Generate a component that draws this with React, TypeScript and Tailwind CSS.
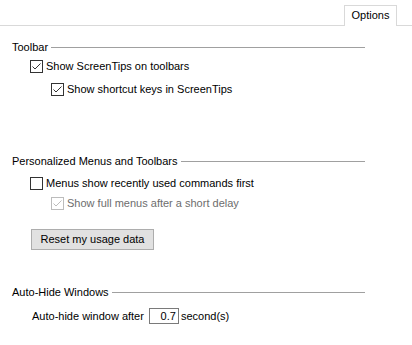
import React from 'react';

const font = { fontFamily: '"Liberation Sans", Arial, sans-serif' };

function Check({ checked, disabled }: { checked?: boolean; disabled?: boolean }) {
  const color = disabled ? '#bcbcbc' : '#333333';
  return (
    <span
      className={`flex h-[13px] w-[13px] shrink-0 items-center justify-center border bg-white ${
        disabled ? 'border-[#bcbcbc]' : 'border-[#333333]'
      }`}
    >
      {checked && (
        <svg width="11" height="11" viewBox="0 0 11 11">
          <polyline points="1.5,5.5 4,8 9.5,2.5" fill="none" stroke={color} strokeWidth="1" />
        </svg>
      )}
    </span>
  );
}

function GroupHeader({ title }: { title: string }) {
  return (
    <div className="mr-[47px] flex h-[14px] items-center gap-[3px] pl-3">
      <span className="leading-[14px] whitespace-nowrap">{title}</span>
      <div className="h-px flex-1 bg-[#a0a0a0]" />
    </div>
  );
}

function CheckRow({
  label,
  checked,
  disabled,
  indent,
  className = '',
}: {
  label: string;
  checked?: boolean;
  disabled?: boolean;
  indent: string;
  className?: string;
}) {
  return (
    <div className={`flex h-[13px] items-center gap-[3px] ${indent} ${className}`}>
      <Check checked={checked} disabled={disabled} />
      <span className={`leading-[13px] whitespace-nowrap ${disabled ? 'text-[#6d6d6d]' : 'text-black'}`}>
        {label}
      </span>
    </div>
  );
}

export default function App() {
  return (
    <div className="h-[345px] w-[412px] bg-white text-[11px] text-black" style={font}>
      {/* tab strip */}
      <div className="flex h-[26px] items-end">
        <div className="h-px flex-1 bg-[#d9d9d9]" />
        <div className="flex h-[21px] w-[53px] items-center justify-center border border-b-0 border-[#d9d9d9] pb-px">
          Options
        </div>
        <div className="h-px w-[15px] bg-[#d9d9d9]" />
      </div>

      {/* Toolbar */}
      <div className="mt-[14px]">
        <GroupHeader title="Toolbar" />
      </div>
      <CheckRow className="mt-[6px]" indent="pl-[30px]" checked label="Show ScreenTips on toolbars" />
      <CheckRow className="mt-[10px]" indent="pl-[51px]" checked label="Show shortcut keys in ScreenTips" />

      {/* Personalized Menus and Toolbars */}
      <div className="mt-[58px]">
        <GroupHeader title="Personalized Menus and Toolbars" />
      </div>
      <CheckRow className="mt-[9px]" indent="pl-[30px]" label="Menus show recently used commands first" />
      <CheckRow className="mt-[7px]" indent="pl-[51px]" checked disabled label="Show full menus after a short delay" />
      <div className="mt-[19px] pl-[31px]">
        <button className="flex h-[21px] w-[123px] items-center justify-center border border-[#adadad] bg-[#e1e1e1] text-black">
          Reset my usage data
        </button>
      </div>

      {/* Auto-Hide Windows */}
      <div className="mt-[35px]">
        <GroupHeader title="Auto-Hide Windows" />
      </div>
      <div className="mt-[9px] flex h-[16px] items-center pl-[32px]">
        <span className="whitespace-nowrap">Auto-hide window after</span>
        <span className="ml-[5px] flex h-[16px] w-[30px] items-center justify-end border border-[#7a7a7a] pr-[2px]">
          0.7
        </span>
        <span className="ml-[2px] whitespace-nowrap">second(s)</span>
      </div>
    </div>
  );
}
